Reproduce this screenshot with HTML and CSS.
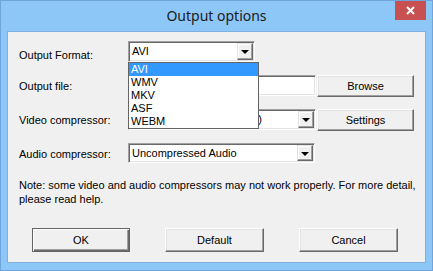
FILE: index.html
```html
<!DOCTYPE html>
<html lang="en">
<head>
	<meta charset="UTF-8">
	<title>Output options</title>
	<link rel="stylesheet" href="styles.css">
</head>
<body>
	<div class="window">
		<!-- title bar -->
		<div class="titlebar">
			<span class="title">Output options</span>
			<a class="close" href="javascript:">
				<svg width="9" height="9" viewBox="0 0 9 9"><path d="M1 1L8 8M8 1L1 8" stroke="#fff" stroke-width="2"/></svg>
			</a>
		</div>
		<!-- client area -->
		<div class="client">
			<div class="form">
				<label class="lbl first">Output Format:</label>
				<div class="field">
					<div class="combo short"><span>AVI</span><i class="drop"></i></div>
				</div>

				<label class="lbl">Output file:</label>
				<div class="field">
					<div class="edit"></div>
					<a class="btn side" href="javascript:">Browse</a>
				</div>

				<label class="lbl">Video compressor:</label>
				<div class="field">
					<div class="combo"><span class="hidden">(default)</span><i class="drop"></i></div>
					<a class="btn side" href="javascript:">Settings</a>
				</div>

				<label class="lbl">Audio compressor:</label>
				<div class="field">
					<div class="combo audio"><span>Uncompressed Audio</span><i class="drop"></i></div>
				</div>
			</div>

			<p class="note">Note: some video and audio compressors may not work properly. For more detail,<br>please read help.</p>

			<div class="actions">
				<a class="btn main" href="javascript:"><span>OK</span></a>
				<a class="btn" href="javascript:">Default</a>
				<a class="btn" href="javascript:">Cancel</a>
			</div>

			<!-- open list of the format combo -->
			<ul class="list">
				<li class="on">AVI</li>
				<li>WMV</li>
				<li>MKV</li>
				<li>ASF</li>
				<li>WEBM</li>
			</ul>
		</div>
	</div>
</body>
</html>
```

FILE: styles.css
```css
html, body {
	margin: 0;
	padding: 0;
	background: #8cc7f7;
}
.window {
	width: 433px;
	height: 271px;
	box-sizing: border-box;
	border: 1px solid #6fa5da;
	background: #8cc7f7;
	font-family: "Liberation Sans", Arial, sans-serif;
	font-size: 11px;
	color: #000;
}
.titlebar {
	height: 30px;
	display: flex;
	align-items: center;
	justify-content: center;
	position: relative;
}
.title {
	font-family: "Noto Sans", "Open Sans", sans-serif;
	font-size: 14px;
	color: #1b1b1b;
	margin-top: -1px;
}
.close {
	position: absolute;
	top: 0;
	right: 6px;
	width: 31px;
	height: 19px;
	background: #c75050;
	display: flex;
	align-items: center;
	justify-content: center;
}
.client {
	position: relative;
	margin: 0 6px;
	height: 232px;
	box-sizing: border-box;
	border: 1px solid #7fb0df;
	background: #f0f0f0;
	padding: 9px 0 0 11px;
}
.form {
	display: grid;
	grid-template-columns: 109px auto;
	grid-auto-rows: 22px;
	row-gap: 12px;
}
.lbl {
	display: flex;
	align-items: center;
}
.lbl.first {
	padding-top: 5px;
}
.field {
	display: flex;
	gap: 1px;
}
/* sunken boxes */
.combo, .edit {
	position: relative;
	box-sizing: border-box;
	height: 21px;
	width: 188px;
	background: #fff;
	border: 1px solid;
	border-color: #a0a0a0 #fff #fff #a0a0a0;
	box-shadow: inset 1px 1px #696969, inset -1px -1px #e3e3e3;
	overflow: hidden;
	white-space: nowrap;
}
.combo span {
	display: block;
	padding: 3px 0 0 3px;
	line-height: 13px;
}
/* only the tail of this text shows past the open list */
.combo span.hidden {
	width: 133px;
	box-sizing: border-box;
	text-align: right;
}
.combo.short {
	width: 127px;
}
.combo.audio {
	width: 187px;
	height: 20px;
}
.drop {
	position: absolute;
	right: 1px;
	top: 1px;
	width: 16px;
	height: 17px;
	box-sizing: border-box;
	background: #f0f0f0;
	border: 1px solid;
	border-color: #e3e3e3 #696969 #696969 #e3e3e3;
	box-shadow: inset -1px -1px #a0a0a0, inset 1px 1px #fff;
}
.combo.audio .drop {
	height: 16px;
}
.drop:after {
	content: "";
	position: absolute;
	left: 3px;
	top: 6px;
	border-left: 4px solid transparent;
	border-right: 4px solid transparent;
	border-top: 4px solid #000;
	width: 0;
	height: 0;
}
/* raised buttons */
.btn {
	box-sizing: border-box;
	display: flex;
	align-items: center;
	justify-content: center;
	width: 97px;
	height: 22px;
	background: #f0f0f0;
	color: #000;
	text-decoration: none;
	border: 1px solid;
	border-color: #fff #696969 #696969 #fff;
	box-shadow: inset -1px -1px #a0a0a0, inset 1px 1px #e3e3e3;
}
.note {
	margin: 13px 0 0;
	line-height: 14px;
}
.actions {
	display: flex;
	gap: 35px;
	margin: 22px 0 0 13px;
}
.actions .btn {
	width: 99px;
	height: 24px;
}
.actions .btn.main {
	width: 98px;
	border: 1px solid #646464;
	box-shadow: inset 1px 1px #fff, inset -1px -1px #696969, inset -2px -2px #a0a0a0;
}
.list {
	position: absolute;
	left: 120px;
	top: 30px;
	width: 129px;
	margin: 0;
	padding: 0;
	list-style: none;
	background: #fff;
	border: 1px solid #646464;
}
.list li {
	height: 13px;
	line-height: 13px;
	padding-left: 2px;
}
.list li.on {
	background: #3399ff;
	color: #fff;
}
```
